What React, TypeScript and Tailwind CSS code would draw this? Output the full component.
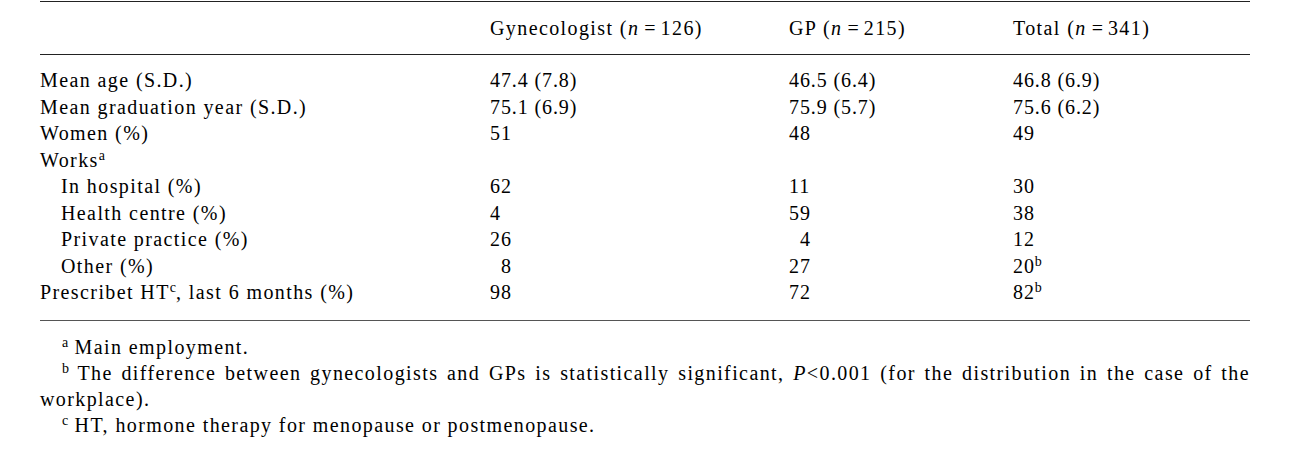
type Row = {
  label: React.ReactNode;
  indent?: boolean;
  gyn?: string;
  gp?: string;
  total?: React.ReactNode;
};

const F = '\u2007';

function Sup({ children }: { children: React.ReactNode }) {
  return <sup className="text-[14px] tracking-normal top-[-0.5em]">{children}</sup>;
}

const rows: Row[] = [
  { label: 'Mean age (S.D.)', gyn: '47.4 (7.8)', gp: '46.5 (6.4)', total: '46.8 (6.9)' },
  { label: 'Mean graduation year (S.D.)', gyn: '75.1 (6.9)', gp: '75.9 (5.7)', total: '75.6 (6.2)' },
  { label: 'Women (%)', gyn: '51', gp: '48', total: '49' },
  {
    label: (
      <>
        Works<Sup>a</Sup>
      </>
    ),
  },
  { label: 'In hospital (%)', indent: true, gyn: '62', gp: '11', total: '30' },
  { label: 'Health centre (%)', indent: true, gyn: '4', gp: '59', total: '38' },
  { label: 'Private practice (%)', indent: true, gyn: '26', gp: F + '4', total: '12' },
  {
    label: 'Other (%)',
    indent: true,
    gyn: F + '8',
    gp: '27',
    total: (
      <>
        20<Sup>b</Sup>
      </>
    ),
  },
  {
    label: (
      <>
        Prescribet HT<Sup>c</Sup>, last 6 months (%)
      </>
    ),
    gyn: '98',
    gp: '72',
    total: (
      <>
        82<Sup>b</Sup>
      </>
    ),
  },
];

function Head({ name, n }: { name: string; n: number }) {
  return (
    <div>
      {name} (<i>n</i>
      <span className="tracking-normal"> = </span>
      {n})
    </div>
  );
}

export default function App() {
  return (
    <main className="min-h-screen bg-white text-black font-['Liberation_Serif','Times_New_Roman',serif] text-[20px] tracking-[1.4px]">
      <section className="ml-[40px] w-[1210px] pt-px">
        {/* header */}
        <div className="grid grid-cols-[450px_299px_224px_1fr] border-y border-[#222] h-[54px] items-center leading-[26px]">
          <div></div>
          <Head name="Gynecologist" n={126} />
          <Head name="GP" n={215} />
          <Head name="Total" n={341} />
        </div>

        {/* body */}
        <div className="pt-[12px] pb-[14px] border-b border-[#555]">
          {rows.map((r, i) => (
            <div
              key={i}
              className="grid grid-cols-[450px_299px_224px_1fr] leading-[26.5px] whitespace-pre"
            >
              <div className={r.indent ? 'pl-[21px]' : ''}>{r.label}</div>
              <div className="tracking-[0.9px]">{r.gyn}</div>
              <div className="tracking-[0.9px]">{r.gp}</div>
              <div className="tracking-[0.9px]">{r.total}</div>
            </div>
          ))}
        </div>

        {/* footnotes */}
        <div className="pt-[13px] leading-[26px]">
          <div className="pl-[22px]">
            <Sup>a</Sup> Main employment.
          </div>
          <div className="pl-[22px] text-justify [text-align-last:justify]">
            <Sup>b</Sup> The difference between gynecologists and GPs is statistically significant, <i>P</i>&lt;0.001 (for the distribution in the case of the
          </div>
          <div>workplace).</div>
          <div className="pl-[22px]">
            <Sup>c</Sup> HT, hormone therapy for menopause or postmenopause.
          </div>
        </div>
      </section>
    </main>
  );
}
